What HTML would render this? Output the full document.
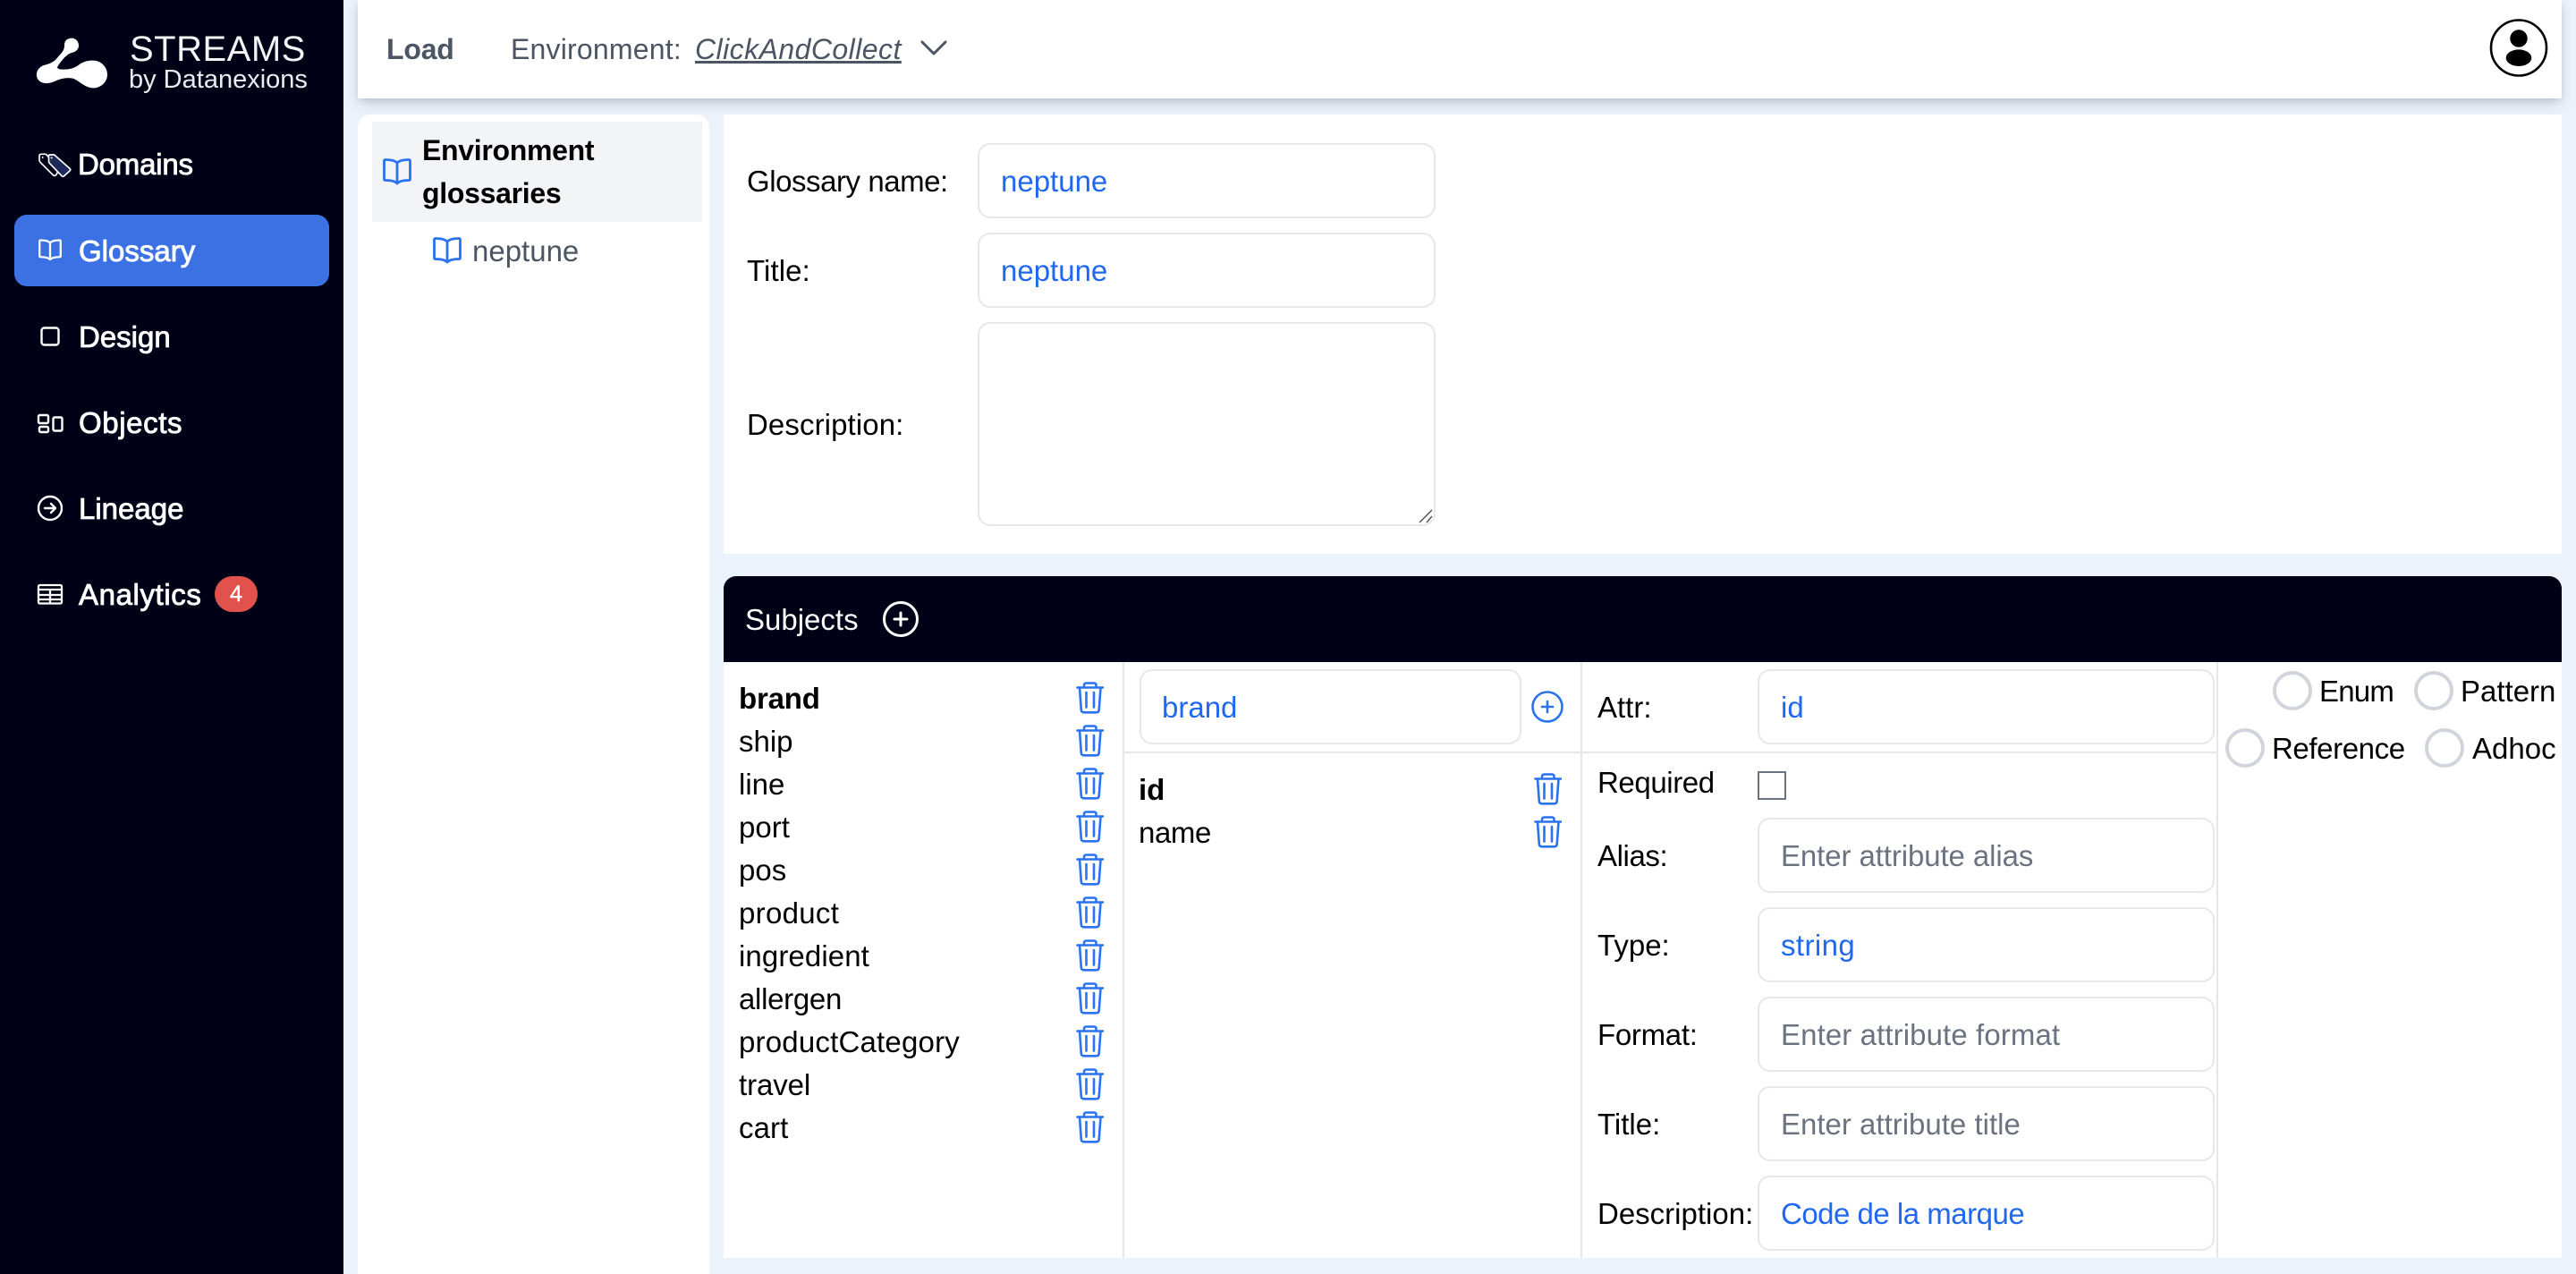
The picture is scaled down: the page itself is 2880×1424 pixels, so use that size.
<!DOCTYPE html>
<html lang="en">
<head>
<meta charset="utf-8">
<title>Streams Glossary</title>
<style>
html,body{margin:0;padding:0;width:2880px;height:1424px;overflow:hidden;background:#ebf2fb;font-family:"Liberation Sans",sans-serif;color:#000}
div,span,svg{position:absolute;display:block}
.t{white-space:nowrap;line-height:48px;height:48px;font-size:33px}
.m{-webkit-text-stroke:.85px currentColor}
.b{font-weight:700}
.blue{color:#2068f0}
.ph{color:#6b7280}
.w{color:#fff}
.in{box-sizing:border-box;border:2px solid #e5e7eb;border-radius:14px;background:#fff}
.r{box-sizing:border-box;width:44px;height:44px;border:4px solid #d1d5db;border-radius:50%;background:#fff}
.tr{width:31px;height:36px}
</style>
</head>
<body>
<svg width="0" height="0" style="position:absolute">
<symbol id="trash" viewBox="0 0 31 36"><path d="M1.5 6.5H30M4 6.5L5.8 31.5Q6 34.3 9 34.3H22.5Q25.5 34.3 25.7 31.5L27.5 6.5M9 6.5V4Q9 1.5 11.5 1.5H20Q22.5 1.5 22.5 4V6.5M11.5 12V28.5M20 12V28.5" fill="none" stroke="#2a72ee" stroke-width="2.600" stroke-linecap="round" stroke-linejoin="round"/></symbol>
<symbol id="book" viewBox="0 0 32 30"><path d="M16 5C13.5 2.5 9 1.5 3 1.5Q1.5 1.5 1.5 3V23Q1.5 24.5 3 24.5C8 24.5 13 25 16 28C19 25 24 24.5 29 24.5Q30.5 24.5 30.5 23V3Q30.5 1.5 29 1.5C23 1.5 18.500 2.500 16 5ZM16 5V28" fill="none" stroke="currentColor" stroke-width="2.800" stroke-linejoin="round"/></symbol>
</svg>

<!-- Sidebar -->
<div style="left:0;top:0;width:384px;height:1424px;background:#000016"></div>
<svg style="left:30px;top:35px" width="100" height="70" viewBox="0 0 300 210"><path fill="#fff" d="M126 45C126 30 138 23 150 23C165 23 174 35 174 48C174 62 162 70 150 72C135 76 118 95 103 118C100 125 108 128 125 128C150 128 165 120 178 110C192 100 210 97 225 98C252 100 270 122 270 145C270 172 245 192 220 190C195 188 180 170 160 160C140 152 115 158 95 167C75 177 50 178 38 162C26 145 35 120 60 113C80 108 95 100 105 85C118 72 127 62 126 45Z"/></svg>
<span class="t" style="left:145px;top:31px;font-size:40px;letter-spacing:.5px;color:#f4f4f6">STREAMS</span>
<span class="t" style="left:144px;top:65px;font-size:29px;color:#ececf0">by Datanexions</span>

<svg style="left:36px;top:165px" width="50" height="40" viewBox="0 0 150 120"><path d="M24 28Q24 22 30 22H46L92 70L80 92Q74 96 70 92L28 50Q24 46 24 42Z" fill="#000016" stroke="#fff" stroke-width="5" stroke-linejoin="round"/><path d="M55 28Q55 24 60 24H74L126 70Q130 74 126 78L106 96Q102 98 98 94L56 50Z" fill="#1e2a5a" stroke="#fff" stroke-width="5" stroke-linejoin="round"/><circle cx="35" cy="33" r="3" fill="#fff"/><circle cx="65" cy="34" r="3" fill="#fff"/></svg>
<span class="t w m" style="left:87px;top:160px;letter-spacing:-.2px">Domains</span>

<div style="left:16px;top:240px;width:352px;height:80px;background:#3b71e3;border-radius:14px"></div>
<svg style="left:43px;top:267px;color:#fff" width="26" height="25"><use href="#book" width="26" height="25"/></svg>
<span class="t w m" style="left:88px;top:257px">Glossary</span>

<svg style="left:44px;top:364px" width="24" height="24"><rect x="2.500" y="2.500" width="19" height="19" rx="3" fill="none" stroke="#fff" stroke-width="2.400"/></svg>
<span class="t w m" style="left:88px;top:353px">Design</span>

<svg style="left:40px;top:461px" width="32" height="24" fill="none" stroke="#fff" stroke-width="2.400"><rect x="3" y="3" width="11" height="9" rx="1.500"/><rect x="4" y="16" width="10" height="6" rx="1.500"/><rect x="19.500" y="5.500" width="10" height="15" rx="1.500"/></svg>
<span class="t w m" style="left:88px;top:449px;letter-spacing:.6px">Objects</span>

<svg style="left:41px;top:553px" width="30" height="30" fill="none" stroke="#fff" stroke-width="2.400" stroke-linecap="round" stroke-linejoin="round"><circle cx="15" cy="15" r="13"/><path d="M9 15H21M16 10L21 15L16 20"/></svg>
<span class="t w m" style="left:88px;top:545px">Lineage</span>

<svg style="left:41px;top:652px" width="30" height="24" fill="none" stroke="#fff" stroke-width="2.300"><rect x="2" y="2" width="26" height="20.500" rx="1.500"/><path d="M2 7H28M2 13H28M2 18H28M15 7V22"/></svg>
<span class="t w m" style="left:88px;top:641px;letter-spacing:.6px">Analytics</span>
<div style="left:240px;top:644px;width:48px;height:40px;border-radius:20px;background:#e0524b"></div>
<span class="t w" style="left:240px;top:640px;width:48px;text-align:center;font-size:25px;-webkit-text-stroke:.4px #fff">4</span>

<!-- Top bar -->
<div style="left:400px;top:0;width:2464px;height:110px;background:#fff;box-shadow:0 6px 14px -2px rgba(30,41,59,.22),0 2px 6px -1px rgba(30,41,59,.1)"></div>
<span class="t b" style="left:432px;top:31px;color:#4b5563;font-size:32px;letter-spacing:-.2px">Load</span>
<span class="t" style="left:571px;top:31px;color:#4b5563;font-size:32px;letter-spacing:.2px">Environment:</span>
<span class="t" style="left:777px;top:31px;color:#4b5563;font-size:32px;font-style:italic;text-decoration:underline;letter-spacing:.45px">ClickAndCollect</span>
<svg style="left:1028px;top:42px" width="32" height="24" fill="none" stroke="#4b5563" stroke-width="3" stroke-linecap="round" stroke-linejoin="round"><path d="M3 5L16 18L29 5"/></svg>
<svg style="left:2780px;top:18px" width="72" height="72"><circle cx="36" cy="35.500" r="31" fill="#fff" stroke="#000" stroke-width="2.600"/><circle cx="36" cy="25" r="9.700" fill="#000"/><ellipse cx="36" cy="46.700" rx="14.300" ry="9.300" fill="#000"/></svg>

<!-- Left tree -->
<div style="left:400px;top:128px;width:393px;height:1296px;background:#fff;border-radius:14px 14px 0 0"></div>
<div style="left:416px;top:136px;width:369px;height:112px;background:#f3f4f6"></div>
<svg style="left:428px;top:177px;color:#2a72ee" width="32" height="30"><use href="#book" width="32" height="30"/></svg>
<span class="t b" style="left:472px;top:144px;font-size:32px;letter-spacing:-.3px">Environment</span>
<span class="t b" style="left:472px;top:192px;font-size:32px;letter-spacing:-.3px">glossaries</span>
<svg style="left:484px;top:265px;color:#2a72ee" width="32" height="30"><use href="#book" width="32" height="30"/></svg>
<span class="t" style="left:528px;top:257px;color:#4b5563">neptune</span>

<!-- Form panel -->
<div style="left:809px;top:128px;width:2055px;height:491px;background:#fff"></div>
<span class="t" style="left:835px;top:179px;letter-spacing:-.45px">Glossary name:</span>
<div class="in" style="left:1093px;top:160px;width:512px;height:84px"></div>
<span class="t blue" style="left:1119px;top:179px">neptune</span>
<span class="t" style="left:835px;top:279px;letter-spacing:.1px">Title:</span>
<div class="in" style="left:1093px;top:260px;width:512px;height:84px"></div>
<span class="t blue" style="left:1119px;top:279px">neptune</span>
<span class="t" style="left:835px;top:451px;letter-spacing:.1px">Description:</span>
<div class="in" style="left:1093px;top:360px;width:512px;height:228px"></div>
<svg style="left:1585px;top:568px" width="18" height="18" stroke="#555" stroke-width="1.500" fill="none"><path d="M2 16L16 2M10 16L16 9"/></svg>

<!-- Subjects -->
<div style="left:809px;top:644px;width:2055px;height:96px;background:#000016;border-radius:14px 14px 0 0"></div>
<span class="t w" style="left:833px;top:669px">Subjects</span>
<svg style="left:986px;top:671px" width="42" height="42" fill="none" stroke="#fff" stroke-width="3" stroke-linecap="round"><circle cx="21" cy="21" r="18.500"/><path d="M21 14V28M14 21H28"/></svg>

<div style="left:809px;top:740px;width:2055px;height:666px;background:#fff"></div>
<div style="left:1255px;top:740px;width:2px;height:666px;background:#e5e7eb"></div>
<div style="left:1767px;top:740px;width:2px;height:666px;background:#e5e7eb"></div>
<div style="left:2478px;top:740px;width:2px;height:666px;background:#e5e7eb"></div>
<div style="left:1256px;top:840px;width:1223px;height:2px;background:#e5e7eb"></div>

<!-- Subject list -->
<span class="t b" style="left:826px;top:757px;letter-spacing:-.2px">brand</span>
<span class="t" style="left:826px;top:805px">ship</span>
<span class="t" style="left:826px;top:853px">line</span>
<span class="t" style="left:826px;top:901px">port</span>
<span class="t" style="left:826px;top:949px">pos</span>
<span class="t" style="left:826px;top:997px;letter-spacing:.3px">product</span>
<span class="t" style="left:826px;top:1045px;letter-spacing:.1px">ingredient</span>
<span class="t" style="left:826px;top:1093px;letter-spacing:-.3px">allergen</span>
<span class="t" style="left:826px;top:1141px;letter-spacing:.2px">productCategory</span>
<span class="t" style="left:826px;top:1189px;letter-spacing:-.1px">travel</span>
<span class="t" style="left:826px;top:1237px;letter-spacing:.1px">cart</span>
<svg class="tr" style="left:1203px;top:762px"><use href="#trash"/></svg>
<svg class="tr" style="left:1203px;top:810px"><use href="#trash"/></svg>
<svg class="tr" style="left:1203px;top:858px"><use href="#trash"/></svg>
<svg class="tr" style="left:1203px;top:906px"><use href="#trash"/></svg>
<svg class="tr" style="left:1203px;top:954px"><use href="#trash"/></svg>
<svg class="tr" style="left:1203px;top:1002px"><use href="#trash"/></svg>
<svg class="tr" style="left:1203px;top:1050px"><use href="#trash"/></svg>
<svg class="tr" style="left:1203px;top:1098px"><use href="#trash"/></svg>
<svg class="tr" style="left:1203px;top:1146px"><use href="#trash"/></svg>
<svg class="tr" style="left:1203px;top:1194px"><use href="#trash"/></svg>
<svg class="tr" style="left:1203px;top:1242px"><use href="#trash"/></svg>

<!-- Subject detail -->
<div class="in" style="left:1274px;top:748px;width:427px;height:84px"></div>
<span class="t blue" style="left:1299px;top:767px">brand</span>
<svg style="left:1711px;top:771px" width="38" height="38" fill="none" stroke="#2a72ee" stroke-width="2.600" stroke-linecap="round"><circle cx="19" cy="19" r="16.500"/><path d="M19 13V25M13 19H25"/></svg>
<span class="t b" style="left:1273px;top:859px">id</span>
<span class="t" style="left:1273px;top:907px;letter-spacing:-.4px">name</span>
<svg class="tr" style="left:1715px;top:864px"><use href="#trash"/></svg>
<svg class="tr" style="left:1715px;top:912px"><use href="#trash"/></svg>

<!-- Attribute form -->
<span class="t" style="left:1786px;top:767px">Attr:</span>
<div class="in" style="left:1965px;top:748px;width:511px;height:84px"></div>
<span class="t blue" style="left:1991px;top:767px">id</span>
<span class="t" style="left:1786px;top:851px;letter-spacing:-.4px">Required</span>
<div style="left:1965px;top:862px;width:32px;height:32px;box-sizing:border-box;border:2px solid #6b7280;background:#fff"></div>
<span class="t" style="left:1786px;top:933px;letter-spacing:-.4px">Alias:</span>
<div class="in" style="left:1965px;top:914px;width:511px;height:84px"></div>
<span class="t ph" style="left:1991px;top:933px;letter-spacing:-.1px">Enter attribute alias</span>
<span class="t" style="left:1786px;top:1033px">Type:</span>
<div class="in" style="left:1965px;top:1014px;width:511px;height:84px"></div>
<span class="t blue" style="left:1991px;top:1033px;letter-spacing:.4px">string</span>
<span class="t" style="left:1786px;top:1133px;letter-spacing:-.3px">Format:</span>
<div class="in" style="left:1965px;top:1114px;width:511px;height:84px"></div>
<span class="t ph" style="left:1991px;top:1133px;letter-spacing:.1px">Enter attribute format</span>
<span class="t" style="left:1786px;top:1233px">Title:</span>
<div class="in" style="left:1965px;top:1214px;width:511px;height:84px"></div>
<span class="t ph" style="left:1991px;top:1233px">Enter attribute title</span>
<span class="t" style="left:1786px;top:1333px">Description:</span>
<div class="in" style="left:1965px;top:1314px;width:511px;height:84px"></div>
<span class="t blue" style="left:1991px;top:1333px;letter-spacing:-.5px">Code de la marque</span>

<!-- Radios -->
<div class="r" style="left:2541px;top:750px"></div>
<span class="t" style="left:2593px;top:749px;letter-spacing:-.8px">Enum</span>
<div class="r" style="left:2699px;top:750px"></div>
<span class="t" style="left:2751px;top:749px">Pattern</span>
<div class="r" style="left:2488px;top:814px"></div>
<span class="t" style="left:2540px;top:813px;letter-spacing:-.4px">Reference</span>
<div class="r" style="left:2711px;top:814px"></div>
<span class="t" style="left:2764px;top:813px">Adhoc</span>
</body>
</html>
